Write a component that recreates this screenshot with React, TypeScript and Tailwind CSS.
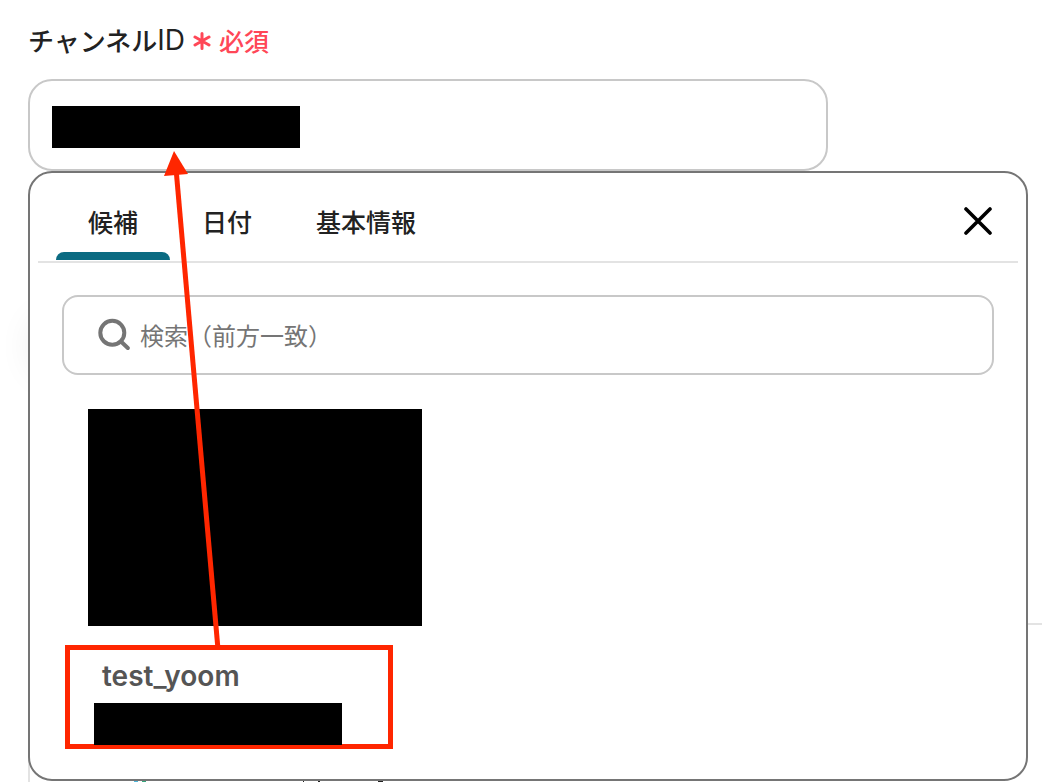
import { useState } from "react";

const TABS = ["候補", "日付", "基本情報"];

function SearchIcon() {
  return (
    <svg className="h-8 w-8 shrink-0" viewBox="0 0 32 32" fill="none" stroke="#757575" strokeWidth="4" aria-hidden="true">
      <circle cx="14.3" cy="14.8" r="12" />
      <path d="M23 23.5L29.8 30" strokeLinecap="round" />
    </svg>
  );
}

function CloseIcon() {
  return (
    <svg className="h-7 w-7" viewBox="0 0 28 28" fill="none" stroke="#000" strokeWidth="3.6" strokeLinecap="round" aria-hidden="true">
      <path d="M2 2L26 26M26 2L2 26" />
    </svg>
  );
}

function AsteriskIcon() {
  return (
    <svg className="h-5 w-[18px]" viewBox="0 0 18 20" fill="none" stroke="#ff4757" strokeWidth="3" strokeLinecap="round" aria-hidden="true">
      <path d="M9 3.5V18.5M2 7L16 15M16 7L2 15" />
    </svg>
  );
}

function Arrow() {
  return (
    <svg className="pointer-events-none absolute left-[160px] top-[146px] z-20 h-[504px] w-[64px]" viewBox="160 146 64 504" aria-hidden="true">
      <path d="M176.3 172L217.8 647" stroke="#ff2600" strokeWidth="5" />
      <path d="M174 151L188 174L164 176Z" fill="#ff2600" />
    </svg>
  );
}

export default function App() {
  const [tab, setTab] = useState(0);

  return (
    <main className="relative min-h-screen overflow-hidden bg-white pl-7 pr-3.5 pt-6 font-['Inter','Noto_Sans_CJK_JP',sans-serif] text-[#222]">
      <div className="absolute left-[34px] right-20 top-[318px] h-14 rounded-3xl shadow-[0_0_36px_rgba(0,0,0,0.1)]" />
      <div className="absolute inset-x-7 bottom-0 top-[740px] border-l-2 border-[#e3e3e3]" />
      <div className="absolute right-0 top-[623px] h-0.5 w-8 bg-[#e3e3e3]" />

      <label htmlFor="channel-id" className="flex h-9 items-center pb-1 font-['Noto_Sans_CJK_JP',sans-serif] text-[26px] font-medium leading-9">
        チャンネル
        <span className="font-['Inter',sans-serif] text-[28px] font-normal">ID</span>
        <span className="ml-2 flex items-center gap-2 text-[25px] font-medium text-[#ff4757]">
          <AsteriskIcon />
          必須
        </span>
      </label>

      <div className="relative mt-[19px] w-4/5">
        <input id="channel-id" type="text" className="block h-[92px] w-full rounded-3xl border-2 border-[#c8c8c8] bg-white px-6 text-2xl outline-none" />
        <span className="absolute left-6 top-[27px] h-[42px] w-[248px] bg-black" />
      </div>

      <section className="relative z-10 rounded-3xl border-2 border-[#757575] bg-white pb-[30px]">
        <header className="mx-2 flex items-center justify-between border-b-2 border-[#e3e3e3] pb-px pl-[18px] pr-[26px]">
          <div role="tablist" className="flex">
            {TABS.map((name, i) => (
              <button
                key={name}
                type="button"
                role="tab"
                aria-selected={tab === i}
                onClick={() => setTab(i)}
                className="flex h-[87px] flex-col items-stretch font-['Noto_Sans_CJK_JP',sans-serif] text-[25px] font-medium leading-9"
              >
                <span className="px-8 pt-[30px]">{name}</span>
                <span className={tab === i ? "mt-auto h-2 rounded-t-lg bg-[#0b6b82]" : "mt-auto h-2"} />
              </button>
            ))}
          </div>
          <button type="button" aria-label="閉じる" className="mt-2">
            <CloseIcon />
          </button>
        </header>

        <label className="mx-8 mt-8 flex h-20 items-center gap-2.5 rounded-2xl border-2 border-[#c8c8c8] pb-0.5 pl-[34px] pr-6">
          <SearchIcon />
          <input
            type="text"
            aria-label="検索"
            placeholder="検索（前方一致）"
            className="h-full min-w-0 flex-1 bg-transparent font-['Noto_Sans_CJK_JP',sans-serif] text-2xl font-normal outline-none placeholder:text-[#757575]"
          />
        </label>

        <div className="ml-[58px] mt-[34px] h-[217px] w-[334px] bg-black" />

        <button type="button" className="relative ml-[35px] mt-[19px] block h-[104px] w-[328px] border-[5px] border-[#ff2600] text-left">
          <span className="block pb-[42px] pl-8 text-[28px] font-semibold leading-9 text-[#555]">test_yoom</span>
          <span className="absolute left-6 top-[53px] h-[42px] w-[248px] bg-black" />
        </button>
      </section>

      <svg className="block h-px w-96" viewBox="28 0 384 1" aria-hidden="true">
        <path d="M134 0H138V1H134Z" fill="#4fb8dc" />
        <path d="M142 0H146V1H142Z" fill="#35a77c" />
        <path d="M303 0H304V1H303ZM318 0H320V1H318ZM378 0H383V1H378Z" fill="#222" />
      </svg>
      <Arrow />
    </main>
  );
}
